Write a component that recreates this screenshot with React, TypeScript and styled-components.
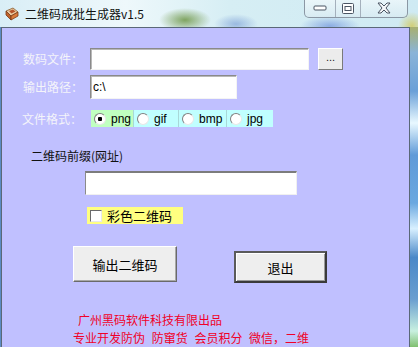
import styled, { createGlobalStyle } from "styled-components";

const GlobalStyle = createGlobalStyle`
  html, body {
    margin: 0;
    padding: 0;
    background: #c0c0ff;
  }
  body {
    width: 418px;
    height: 347px;
    overflow: hidden;
    font-family: "Noto Sans CJK SC", "Liberation Sans", sans-serif;
  }
`;

const formats = ["png", "gif", "bmp", "jpg"];

const App: React.FC = () => {
  return (
    <>
      <GlobalStyle />
      <Window>
        <TitleBar>
          <TitleLeft>
            <AppIcon />
            <TitleText>二维码成批生成器v1.5</TitleText>
          </TitleLeft>
          <CaptionGroup>
            <CaptionButton $width={30}>
              <svg width="14" height="8" viewBox="0 0 14 8">
                <rect x="1" y="2" width="12" height="4" rx="1" fill="#fff" stroke="#4b5563" />
              </svg>
            </CaptionButton>
            <CaptionButton $width={24}>
              <svg width="12" height="11" viewBox="0 0 12 11">
                <rect x="0.5" y="0.5" width="11" height="10" rx="1" fill="#fff" stroke="#4b5563" />
                <rect x="3" y="3.5" width="6" height="4" fill="none" stroke="#4b5563" />
              </svg>
            </CaptionButton>
            <CaptionButton $width={46} $last>
              <svg width="16" height="12" viewBox="0 0 16 12">
                <path
                  d="M2 1 H5 L8 4 L11 1 H14 L10 6 L14 11 H11 L8 8 L5 11 H2 L6 6 Z"
                  fill="#f4f6f8"
                  stroke="#4b5563"
                  strokeLinejoin="round"
                />
              </svg>
            </CaptionButton>
          </CaptionGroup>
        </TitleBar>
        <Body>
          <LeftFrame />
          <Client>
            <FieldRow $top={20}>
              <FieldLabel>数码文件：</FieldLabel>
              <TextBox $width={219} $height={22} />
              <BrowseButton>...</BrowseButton>
            </FieldRow>
            <FieldRow $top={5}>
              <FieldLabel>输出路径：</FieldLabel>
              <TextBox $width={147} $height={24} defaultValue="c:\" />
            </FieldRow>
            <FieldRow $top={11}>
              <FieldLabel $left={20}>文件格式：</FieldLabel>
              <RadioGroup>
                {formats.map((f, i) => (
                  <RadioCell key={f} $active={i === 0} $width={[43, 45, 48, 46][i]}>
                    <RadioDot $checked={i === 0} />
                    <span>{f}</span>
                  </RadioCell>
                ))}
              </RadioGroup>
            </FieldRow>
            <PrefixLabel>二维码前缀(网址)</PrefixLabel>
            <PrefixBox />
            <ColorCheck>
              <CheckBox />
              <span>彩色二维码</span>
            </ColorCheck>
            <ButtonRow>
              <PushButton $width={104} $height={36}>输出二维码</PushButton>
              <PushButton $width={93} $height={32} $default>退出</PushButton>
            </ButtonRow>
            <Credits>
              <CreditLine $indent={76}>广州黑码软件科技有限出品</CreditLine>
              <CreditLine $indent={71} $spaced>专业开发防伪 防窜货 会员积分 微信，二维</CreditLine>
            </Credits>
          </Client>
          <RightFrame />
        </Body>
      </Window>
    </>
  );
};

const AppIcon: React.FC = () => (
  <svg width="16" height="16" viewBox="0 0 16 16">
    <path d="M2 5 L9 2 L14 6 L7 10 Z" fill="#e9c9a0" stroke="#8a5a2a" strokeWidth="0.8" />
    <path d="M2 5 L7 10 L7 14 L2 9 Z" fill="#c0622a" stroke="#7a3a18" strokeWidth="0.8" />
    <path d="M7 10 L14 6 L14 10 L7 14 Z" fill="#d97a3a" stroke="#7a3a18" strokeWidth="0.8" />
    <path d="M5 5 L9 3.5 L11.5 5.5 L7.5 7.5 Z" fill="#b5532a" />
  </svg>
);

const Window = styled.div`
  width: 418px;
  height: 347px;
  display: flex;
  flex-direction: column;
  background: linear-gradient(180deg, #cfe6f2 0%, #e6f4fa 100%);
`;

const TitleBar = styled.div`
  height: 28px;
  display: flex;
  justify-content: space-between;
  align-items: flex-start;
  background:
    radial-gradient(ellipse 26px 12px at 185px 20px, rgba(110, 150, 70, 0.85), rgba(110, 150, 70, 0) 100%),
    radial-gradient(ellipse 22px 10px at 236px 24px, rgba(80, 120, 200, 0.45), rgba(80, 120, 200, 0) 100%),
    radial-gradient(ellipse 30px 10px at 330px 26px, rgba(70, 110, 210, 0.5), rgba(70, 110, 210, 0) 100%),
    radial-gradient(ellipse 14px 14px at 412px 26px, rgba(210, 200, 90, 0.8), rgba(210, 200, 90, 0) 100%),
    linear-gradient(90deg, #d9eef6 0%, #eef8fb 30%, #d6eef4 55%, #cfeaf3 100%);
`;

const TitleLeft = styled.div`
  display: flex;
  align-items: center;
  gap: 5px;
  padding: 6px 0 0 4px;
`;

const TitleText = styled.span`
  font-size: 12px;
  color: #111;
  line-height: 16px;
`;

const CaptionGroup = styled.div`
  display: flex;
  margin-right: 10px;
  margin-top: -1px;
  border: 1px solid #8b97a4;
  border-top: none;
  border-radius: 0 0 5px 5px;
  overflow: hidden;
  background: linear-gradient(180deg, rgba(255, 255, 255, 0.55), rgba(220, 235, 242, 0.6));
`;

const CaptionButton = styled.div<{ $width: number; $last?: boolean }>`
  width: ${({ $width }) => $width}px;
  height: 18px;
  display: flex;
  align-items: center;
  justify-content: center;
  border-right: ${({ $last }) => ($last ? "none" : "1px solid #a4b0bc")};
`;

const Body = styled.div`
  flex: 1;
  display: flex;
`;

const LeftFrame = styled.div`
  width: 1px;
  background: #5c8cc4;
`;

const RightFrame = styled.div`
  width: 8px;
  background: linear-gradient(
    180deg,
    #a8b070 0%,
    #8ab4d8 8%,
    #6aa0d8 20%,
    #e8f8ff 30%,
    #5f9ad8 40%,
    #6aa8e0 55%,
    #d8f0ff 63%,
    #4a88c8 72%,
    #6a9ed0 85%,
    #c8f0e0 95%,
    #80c070 100%
  );
`;

const Client = styled.div`
  width: 407px;
  border: 1px solid #5a6878;
  border-bottom: none;
  background: #c0c0ff;
  display: flex;
  flex-direction: column;
  overflow: hidden;
`;

const FieldRow = styled.div<{ $top: number }>`
  display: flex;
  align-items: center;
  margin-top: ${({ $top }) => $top}px;
  padding-left: 21px;
`;

const FieldLabel = styled.span<{ $left?: number }>`
  width: 67px;
  margin-left: ${({ $left }) => ($left ? $left - 21 : 0)}px;
  font-size: 12px;
  color: #f4f4fa;
  line-height: 16px;
  white-space: nowrap;
`;

const TextBox = styled.input<{ $width: number; $height: number }>`
  box-sizing: border-box;
  width: ${({ $width }) => $width}px;
  height: ${({ $height }) => $height}px;
  margin: 0;
  padding: 0 2px;
  border: 1px solid;
  border-color: #8a8a8a #f4f4f4 #f4f4f4 #8a8a8a;
  box-shadow: inset 1px 1px 0 #b8b8b8;
  background: #fff;
  font-family: "Liberation Sans", sans-serif;
  font-size: 12px;
  color: #000;
  outline: none;
`;

const BrowseButton = styled.button`
  box-sizing: border-box;
  width: 25px;
  height: 22px;
  margin: -1px 0 0 9px;
  padding: 0 0 4px;
  border: 1px solid;
  border-color: #fff #7a7a7a #7a7a7a #fff;
  background: #ececec;
  font-family: "Liberation Sans", sans-serif;
  font-size: 11px;
  color: #222;
`;

const RadioGroup = styled.div`
  display: flex;
  height: 17px;
  margin-left: 2px;
`;

const RadioCell = styled.label<{ $active: boolean; $width: number }>`
  box-sizing: border-box;
  width: ${({ $width }) => $width}px;
  display: flex;
  align-items: center;
  gap: 5px;
  padding-left: 3px;
  background: ${({ $active }) => ($active ? "#c0ffc0" : "#c0ffff")};
  border-right: 1px solid #a8d8d8;
  font-family: "Liberation Sans", sans-serif;
  font-size: 12px;
  color: #000;

  &:last-child {
    border-right: none;
  }
`;

const RadioDot = styled.span<{ $checked: boolean }>`
  box-sizing: border-box;
  width: 12px;
  height: 12px;
  border-radius: 50%;
  border: 1px solid;
  border-color: #808080 #e8e8e8 #e8e8e8 #808080;
  background: ${({ $checked }) =>
    $checked
      ? "radial-gradient(circle, #000 0 2px, #fff 2.5px)"
      : "#fff"};
`;

const PrefixLabel = styled.div`
  margin: 21px 0 0 29px;
  font-size: 12px;
  line-height: 16px;
  color: #111;
`;

const PrefixBox = styled.div`
  box-sizing: border-box;
  width: 212px;
  height: 24px;
  margin: 7px 0 0 83px;
  background: #fff;
  border-top: 2px solid #7c7c7c;
  border-left: 1px solid #8a8a8a;
  border-right: 1px solid #f0f0f0;
  border-bottom: 1px solid #f0f0f0;
`;

const ColorCheck = styled.label`
  box-sizing: border-box;
  width: 96px;
  height: 17px;
  margin: 12px 0 0 85px;
  display: flex;
  align-items: center;
  gap: 5px;
  padding-left: 3px;
  background: #ffff80;
  font-size: 13px;
  color: #000;
`;

const CheckBox = styled.span`
  box-sizing: border-box;
  width: 12px;
  height: 12px;
  background: #fff;
  border: 1px solid;
  border-color: #6a6a6a #e8e8e8 #e8e8e8 #6a6a6a;
`;

const ButtonRow = styled.div`
  display: flex;
  align-items: flex-start;
  gap: 57px;
  margin: 22px 0 0 71px;
`;

const PushButton = styled.button<{ $width: number; $height: number; $default?: boolean }>`
  box-sizing: border-box;
  width: ${({ $width }) => $width}px;
  height: ${({ $height }) => $height}px;
  margin-top: ${({ $default }) => ($default ? 5 : 0)}px;
  padding: 0;
  background: #eeeeee;
  border: ${({ $default }) => ($default ? "2px" : "1px")} solid;
  border-color: ${({ $default }) =>
    $default ? "#5a5a5a #3a3a3a #3a3a3a #5a5a5a" : "#fff #6a6a6a #6a6a6a #fff"};
  box-shadow: ${({ $default }) =>
    $default ? "inset 1px 1px 0 #fff, inset -1px -1px 0 #9a9a9a" : "inset -1px -1px 0 #a8a8a8"};
  font-family: "Noto Sans CJK SC", sans-serif;
  font-size: 13px;
  color: #000;
`;

const Credits = styled.div`
  margin-top: 28px;
  display: flex;
  flex-direction: column;
`;

const CreditLine = styled.div<{ $indent: number; $spaced?: boolean }>`
  padding-left: ${({ $indent }) => $indent}px;
  font-size: 12px;
  line-height: 18px;
  color: #f00028;
  white-space: nowrap;
  word-spacing: ${({ $spaced }) => ($spaced ? "4px" : "0")};
`;

export default App;
